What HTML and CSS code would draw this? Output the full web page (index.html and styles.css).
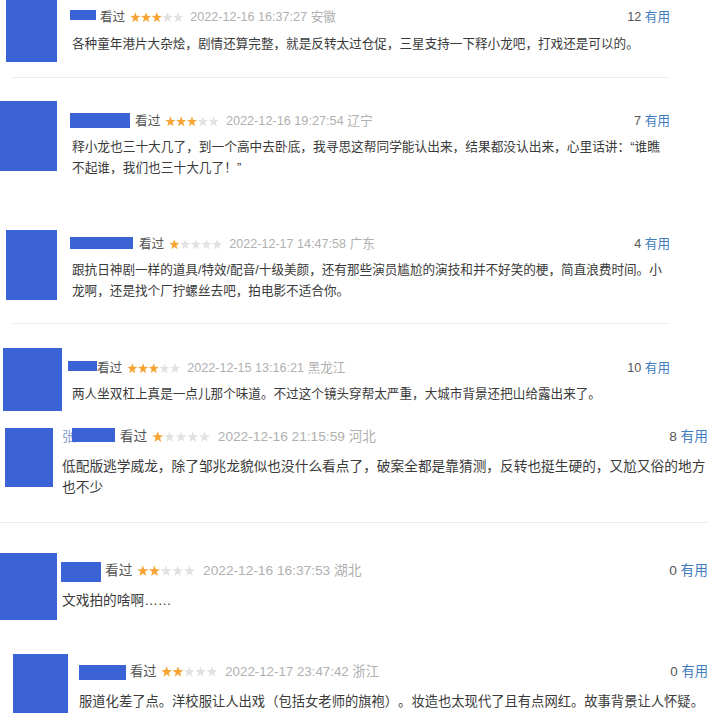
FILE: index.html
```html
<!DOCTYPE html>
<html lang="zh-CN">
<head>
<meta charset="utf-8">
<title>短评</title>
<link rel="stylesheet" href="styles.css">
</head>
<body>
<svg class="defs" width="0" height="0" aria-hidden="true">
  <defs>
    <polygon id="star" points="5,0.3 6.2,3.6 9.8,3.7 6.9,5.9 7.9,9.5 5,7.4 2.1,9.5 3.1,5.9 0.2,3.7 3.8,3.6"/>
  </defs>
</svg>
<main class="feed">

  <section class="shot shot--1">
    <div class="row">
      <div class="avatar"></div>
      <div class="body">
        <div class="meta">
          <span class="name"></span>
          <span class="seen">看过</span>
          <svg class="stars" viewBox="0 0 50 10"><use href="#star" class="on"/><use href="#star" x="10" class="on"/><use href="#star" x="20" class="on"/><use href="#star" x="30" class="off"/><use href="#star" x="40" class="off"/></svg>
          <span class="time">2022-12-16 16:37:27 安徽</span>
          <span class="votes"><span class="count">12</span> <a class="useful">有用</a></span>
        </div>
        <p class="text">各种童年港片大杂烩，剧情还算完整，就是反转太过仓促，三星支持一下释小龙吧，打戏还是可以的。</p>
      </div>
    </div>
    <div class="divider"></div>
  </section>

  <section class="shot shot--2">
    <div class="row">
      <div class="avatar"></div>
      <div class="body">
        <div class="meta">
          <span class="name"></span>
          <span class="seen">看过</span>
          <svg class="stars" viewBox="0 0 50 10"><use href="#star" class="on"/><use href="#star" x="10" class="on"/><use href="#star" x="20" class="on"/><use href="#star" x="30" class="off"/><use href="#star" x="40" class="off"/></svg>
          <span class="time">2022-12-16 19:27:54 辽宁</span>
          <span class="votes"><span class="count">7</span> <a class="useful">有用</a></span>
        </div>
        <p class="text">释小龙也三十大几了，到一个高中去卧底，我寻思这帮同学能认出来，结果都没认出来，心里话讲：“谁瞧<br>不起谁，我们也三十大几了！”</p>
      </div>
    </div>
  </section>

  <section class="shot shot--3">
    <div class="row">
      <div class="avatar"></div>
      <div class="body">
        <div class="meta">
          <span class="name"></span>
          <span class="seen">看过</span>
          <svg class="stars" viewBox="0 0 50 10"><use href="#star" class="on"/><use href="#star" x="10" class="off"/><use href="#star" x="20" class="off"/><use href="#star" x="30" class="off"/><use href="#star" x="40" class="off"/></svg>
          <span class="time">2022-12-17 14:47:58 广东</span>
          <span class="votes"><span class="count">4</span> <a class="useful">有用</a></span>
        </div>
        <p class="text">跟抗日神剧一样的道具/特效/配音/十级美颜，还有那些演员尴尬的演技和并不好笑的梗，简直浪费时间。小<br>龙啊，还是找个厂拧螺丝去吧，拍电影不适合你。</p>
      </div>
    </div>
    <div class="divider"></div>
  </section>

  <section class="shot shot--4">
    <div class="row">
      <div class="avatar"></div>
      <div class="body">
        <div class="meta">
          <span class="name"></span>
          <span class="seen">看过</span>
          <svg class="stars" viewBox="0 0 50 10"><use href="#star" class="on"/><use href="#star" x="10" class="on"/><use href="#star" x="20" class="on"/><use href="#star" x="30" class="off"/><use href="#star" x="40" class="off"/></svg>
          <span class="time">2022-12-15 13:16:21 黑龙江</span>
          <span class="votes"><span class="count">10</span> <a class="useful">有用</a></span>
        </div>
        <p class="text">两人坐双杠上真是一点儿那个味道。不过这个镜头穿帮太严重，大城市背景还把山给露出来了。</p>
      </div>
    </div>
  </section>

  <section class="shot shot--5">
    <div class="row">
      <div class="avatar"></div>
      <div class="body">
        <div class="meta">
          <span class="name-lead">张</span>
          <span class="name"></span>
          <span class="seen">看过</span>
          <svg class="stars" viewBox="0 0 50 10"><use href="#star" class="on"/><use href="#star" x="10" class="off"/><use href="#star" x="20" class="off"/><use href="#star" x="30" class="off"/><use href="#star" x="40" class="off"/></svg>
          <span class="time">2022-12-16 21:15:59 河北</span>
          <span class="votes"><span class="count">8</span> <a class="useful">有用</a></span>
        </div>
        <p class="text">低配版逃学威龙，除了邹兆龙貌似也没什么看点了，破案全都是靠猜测，反转也挺生硬的，又尬又俗的地方<br>也不少</p>
      </div>
    </div>
    <div class="divider"></div>
  </section>

  <section class="shot shot--6">
    <div class="row">
      <div class="avatar"></div>
      <div class="body">
        <div class="meta">
          <span class="name"></span>
          <span class="seen">看过</span>
          <svg class="stars" viewBox="0 0 50 10"><use href="#star" class="on"/><use href="#star" x="10" class="on"/><use href="#star" x="20" class="off"/><use href="#star" x="30" class="off"/><use href="#star" x="40" class="off"/></svg>
          <span class="time">2022-12-16 16:37:53 湖北</span>
          <span class="votes"><span class="count">0</span> <a class="useful">有用</a></span>
        </div>
        <p class="text">文戏拍的啥啊……</p>
      </div>
    </div>
  </section>

  <section class="shot shot--7">
    <div class="row">
      <div class="avatar"></div>
      <div class="body">
        <div class="meta">
          <span class="name"></span>
          <span class="seen">看过</span>
          <svg class="stars" viewBox="0 0 50 10"><use href="#star" class="on"/><use href="#star" x="10" class="on"/><use href="#star" x="20" class="off"/><use href="#star" x="30" class="off"/><use href="#star" x="40" class="off"/></svg>
          <span class="time">2022-12-17 23:47:42 浙江</span>
          <span class="votes"><span class="count">0</span> <a class="useful">有用</a></span>
        </div>
        <p class="text">服道化差了点。洋校服让人出戏（包括女老师的旗袍）。妆造也太现代了且有点网红。故事背景让人怀疑。</p>
      </div>
    </div>
  </section>

</main>
</body>
</html>
```

FILE: styles.css
```css
html, body {
  margin: 0;
  padding: 0;
  background: #ffffff;
}

body {
  font-family: "Liberation Sans", "Noto Sans CJK SC", sans-serif;
  color: #333333;
  width: 715px;
  height: 728px;
  overflow: hidden;
}

.defs {
  position: absolute;
  width: 0;
  height: 0;
}

.feed {
  display: flex;
  flex-direction: column;
}

.shot {
  height: var(--h);
  width: var(--w);
  flex: none;
}

.row {
  display: flex;
  align-items: flex-start;
}

.avatar {
  flex: none;
  width: var(--av-w);
  height: var(--av-h);
  margin: var(--av-mt) 0 0 var(--av-ml);
  background: #3c63d6;
}

.body {
  flex: 1;
  min-width: 0;
  margin-left: var(--gap);
  padding-top: var(--pt);
  font-size: var(--fs);
}

.meta {
  display: flex;
  align-items: center;
  height: 20px;
  line-height: 20px;
  white-space: nowrap;
}

.name {
  flex: none;
  align-self: flex-start;
  width: var(--nm-w);
  height: var(--nm-h);
  margin-top: var(--nm-mt);
  background: #3c63d6;
}

.name-lead {
  color: #8aa0cf;
  margin-right: -4px;
}

.seen {
  color: #555555;
  margin-left: var(--seen-ml, 4px);
}

.stars {
  width: 4.25em;
  height: 0.85em;
  margin-left: 0.36em;
}

.stars .on {
  fill: #f7a435;
}

.stars .off {
  fill: #e2e2e2;
}

.time {
  color: #b0b0b0;
  margin-left: 0.55em;
}

.votes {
  margin-left: auto;
}

.count {
  color: #555555;
}

.useful {
  color: #3f7dbd;
  text-decoration: none;
}

.text {
  margin: var(--tgap) 0 0;
  padding-left: var(--text-pl);
  line-height: 21px;
  white-space: nowrap;
  color: #3a3a3a;
  text-spacing-trim: space-all;
}

.divider {
  height: 1px;
  background: #eeeeee;
  margin-top: var(--dv-mt);
  margin-left: var(--dv-ml);
}

.shot--1 {
  --h: 90px; --w: 670px;
  --av-w: 51px; --av-h: 62px; --av-mt: 0px; --av-ml: 6px;
  --gap: 13px; --pt: 7px; --fs: 12.6px; --tgap: 7px; --text-pl: 2px;
  --nm-w: 26px; --nm-h: 10px; --nm-mt: 3px;
  --dv-mt: 15px; --dv-ml: 12px;
}

.shot--2 {
  --h: 125px; --w: 670px;
  --av-w: 57px; --av-h: 70px; --av-mt: 11px; --av-ml: 0px;
  --gap: 13px; --pt: 21px; --fs: 12.7px; --tgap: 6px; --text-pl: 2px;
  --nm-w: 60px; --nm-h: 15px; --nm-mt: 2px;
  --seen-ml: 5px;
}

.shot--3 {
  --h: 120px; --w: 670px;
  --av-w: 51px; --av-h: 70px; --av-mt: 15px; --av-ml: 6px;
  --gap: 13px; --pt: 19px; --fs: 12.6px; --tgap: 6px; --text-pl: 2px;
  --nm-w: 63px; --nm-h: 12px; --nm-mt: 3px;
  --seen-ml: 6px;
  --dv-mt: 21px; --dv-ml: 12px;
}

.shot--4 {
  --h: 85px; --w: 670px;
  --av-w: 59px; --av-h: 63px; --av-mt: 13px; --av-ml: 3px;
  --gap: 6px; --pt: 23px; --fs: 12.6px; --tgap: 6px; --text-pl: 4px;
  --nm-w: 29px; --nm-h: 10px; --nm-mt: 3px;
  --seen-ml: 0px;
}

.shot--5 {
  --h: 115px; --w: 708px;
  --av-w: 48px; --av-h: 59px; --av-mt: 8px; --av-ml: 5px;
  --gap: 9px; --pt: 7px; --fs: 13.7px; --tgap: 9px; --text-pl: 0px;
  --nm-w: 43px; --nm-h: 14px; --nm-mt: 1px;
  --seen-ml: 5px;
  --dv-mt: 24px; --dv-ml: 0px;
}

.shot--6 {
  --h: 105px; --w: 708px;
  --av-w: 57px; --av-h: 67px; --av-mt: 18px; --av-ml: 0px;
  --gap: 4px; --pt: 26px; --fs: 13.7px; --tgap: 9px; --text-pl: 1px;
  --nm-w: 40px; --nm-h: 20px; --nm-mt: 1px;
}

.shot--7 {
  --h: 88px; --w: 708px;
  --av-w: 55px; --av-h: 59px; --av-mt: 14px; --av-ml: 13px;
  --gap: 11px; --pt: 22px; --fs: 13.3px; --tgap: 9px; --text-pl: 0px;
  --nm-w: 47px; --nm-h: 15px; --nm-mt: 3px;
}
```
